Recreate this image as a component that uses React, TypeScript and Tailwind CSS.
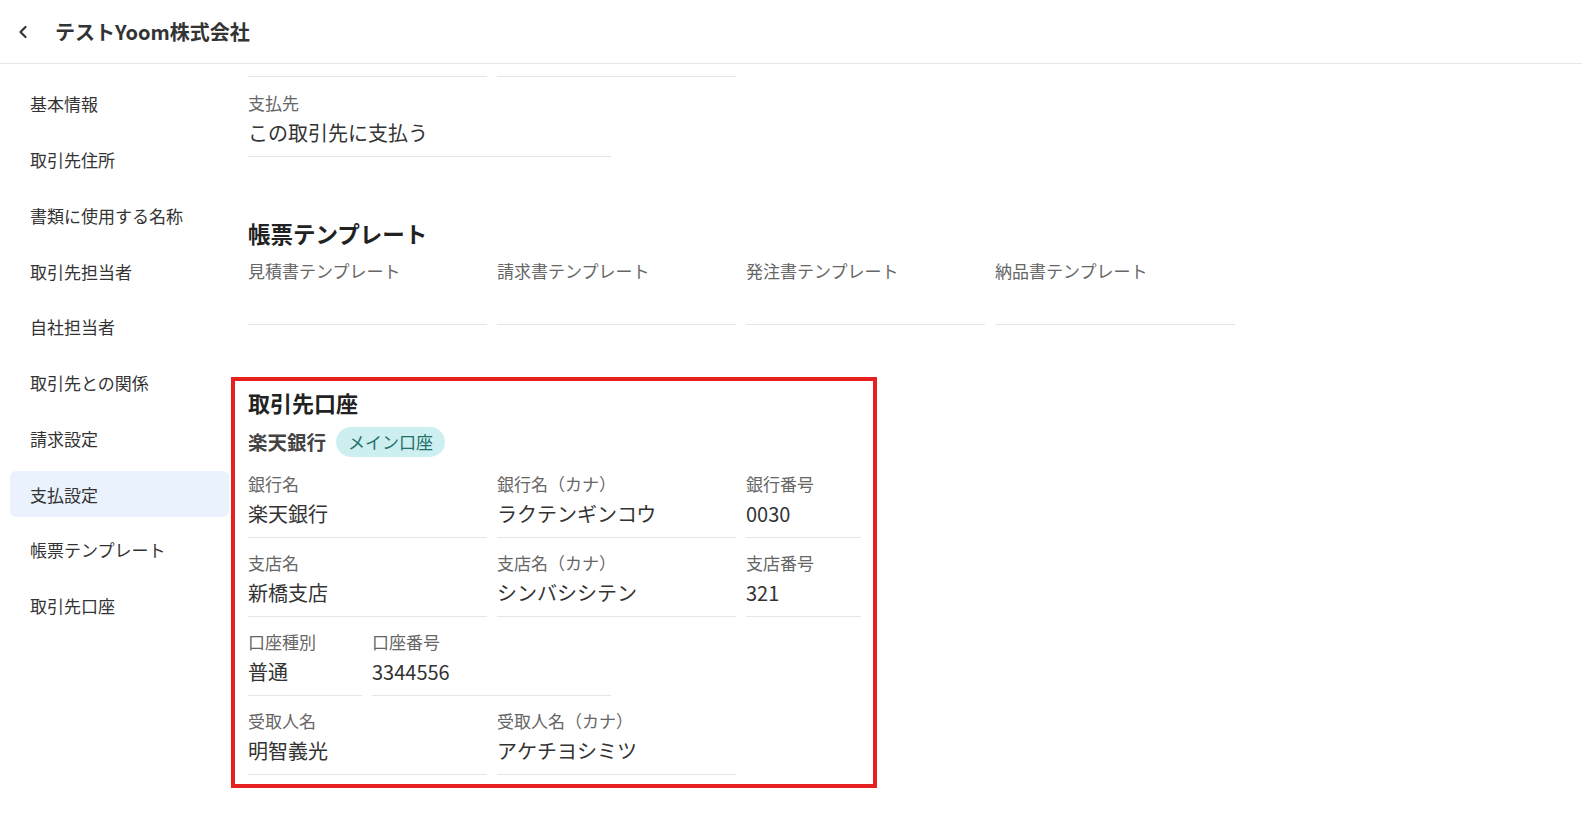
import { ReactNode } from 'react';

const navItems = [
  '基本情報',
  '取引先住所',
  '書類に使用する名称',
  '取引先担当者',
  '自社担当者',
  '取引先との関係',
  '請求設定',
  '支払設定',
  '帳票テンプレート',
  '取引先口座',
];

interface FieldProps {
  label: string;
  value?: string;
  width: string;
  pt?: string;
}

function Field({ label, value, width, pt = 'pt-[14px]' }: FieldProps) {
  return (
    <div className={`${width} ${pt} pb-[9px] border-b border-[#e2e8e8]`}>
      <div className="text-[17px] leading-[22px] text-[#666]">{label}</div>
      <div className="mt-[5px] h-[28px] text-[20px] leading-[28px] text-[#333]">{value}</div>
    </div>
  );
}

function Row({ children }: { children: ReactNode }) {
  return <div className="flex gap-[10px]">{children}</div>;
}

export default function App() {
  return (
    <div
      className="min-h-screen bg-white text-[#333]"
      style={{ fontFamily: '"Noto Sans CJK JP", "Noto Sans", sans-serif' }}
    >
      <header className="flex h-[64px] items-center border-b border-[#e2e8e8]">
        <button type="button" className="ml-[15px] flex h-[16px] w-[16px] items-center justify-center">
          <svg width="12" height="14" viewBox="0 0 12 14" fill="none">
            <path d="M8.5 2 L3.5 7 L8.5 12" stroke="#333" strokeWidth="2.2" strokeLinecap="round" strokeLinejoin="round" />
          </svg>
        </button>
        <h1 className="ml-[24px] text-[20px] font-bold leading-[28px] text-[#333]">テストYoom株式会社</h1>
      </header>

      <div className="flex">
        <nav className="flex w-[229px] shrink-0 flex-col gap-[9.75px] pl-[10px] pt-[17px]">
          {navItems.map((item) => (
            <div
              key={item}
              className={`flex h-[46px] items-center rounded-md pl-[20px] text-[17px] text-[#333] ${
                item === '支払設定' ? 'bg-[#eaf2fd]' : ''
              }`}
            >
              {item}
            </div>
          ))}
        </nav>

        <main className="flex-1 pl-[19px]">
          {/* tail of the previous section (scrolled) */}
          <div className="mt-[12px] flex gap-[10px]">
            <div className="h-px w-[239px] bg-[#e2e8e8]" />
            <div className="h-px w-[239px] bg-[#e2e8e8]" />
          </div>

          <Field label="支払先" value="この取引先に支払う" width="w-[363px]" pt="pt-[15px]" />

          <h2 className="mt-[61px] text-[22.5px] font-bold leading-[30px] text-[#222]">帳票テンプレート</h2>
          <Row>
            <Field label="見積書テンプレート" width="w-[239px]" pt="pt-[12px]" />
            <Field label="請求書テンプレート" width="w-[239px]" pt="pt-[12px]" />
            <Field label="発注書テンプレート" width="w-[239px]" pt="pt-[12px]" />
            <Field label="納品書テンプレート" width="w-[240px]" pt="pt-[12px]" />
          </Row>

          <section className="ml-[-17px] mt-[52px] w-[646px] border-4 border-[#e5201f] pb-[9px] pl-[13px] pt-[6px]">
            <h2 className="text-[22px] font-bold leading-[30px] text-[#222]">取引先口座</h2>
            <div className="mt-[10px] flex h-[30px] items-center gap-[10px]">
              <span className="text-[19.5px] font-bold text-[#444]">楽天銀行</span>
              <span className="flex h-[30px] items-center rounded-full bg-[#cdeff0] px-[12px] text-[17px] text-[#1f6f6c]">
                メイン口座
              </span>
            </div>
            <Row>
              <Field label="銀行名" value="楽天銀行" width="w-[239px]" pt="pt-[16px]" />
              <Field label="銀行名（カナ）" value="ラクテンギンコウ" width="w-[239px]" pt="pt-[16px]" />
              <Field label="銀行番号" value="0030" width="w-[115px]" pt="pt-[16px]" />
            </Row>
            <Row>
              <Field label="支店名" value="新橋支店" width="w-[239px]" />
              <Field label="支店名（カナ）" value="シンバシシテン" width="w-[239px]" />
              <Field label="支店番号" value="321" width="w-[115px]" />
            </Row>
            <Row>
              <Field label="口座種別" value="普通" width="w-[114px]" />
              <Field label="口座番号" value="3344556" width="w-[239px]" />
            </Row>
            <Row>
              <Field label="受取人名" value="明智義光" width="w-[239px]" />
              <Field label="受取人名（カナ）" value="アケチヨシミツ" width="w-[239px]" />
            </Row>
          </section>
        </main>
      </div>
    </div>
  );
}
